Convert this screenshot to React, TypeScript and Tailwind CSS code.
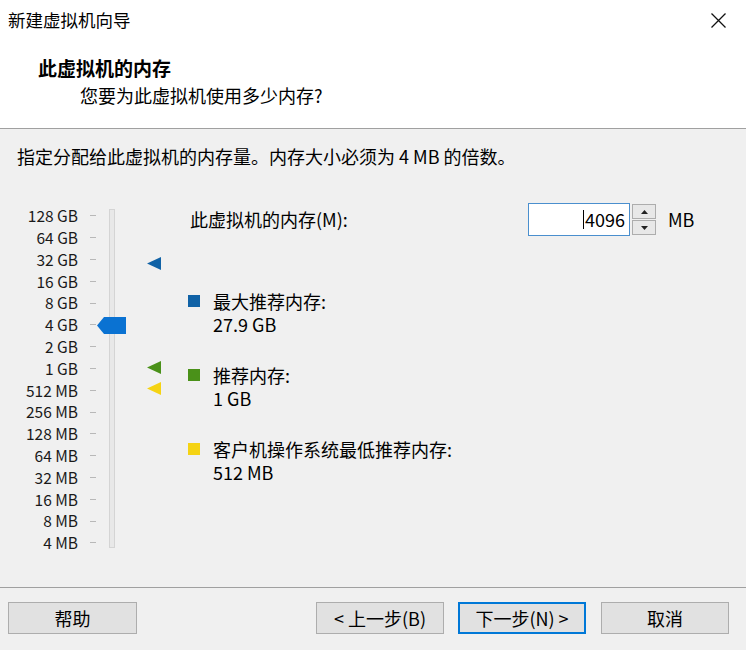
import React from 'react';

const font = { fontFamily: '"Noto Sans CJK SC", "Noto Sans", sans-serif' };

const levels = [
  '128 GB', '64 GB', '32 GB', '16 GB', '8 GB', '4 GB', '2 GB', '1 GB',
  '512 MB', '256 MB', '128 MB', '64 MB', '32 MB', '16 MB', '8 MB', '4 MB',
];

const Marker: React.FC<{ top: string; fill: string }> = ({ top, fill }) => (
  <svg className={`absolute left-[147px] ${top}`} width="14" height="13" viewBox="0 0 14 13">
    <polygon points="0,6.5 14,0 14,13" fill={fill} />
  </svg>
);

const MemorySlider: React.FC = () => (
  <div className="relative w-[188px] pt-[2px]">
    <div className="flex flex-col">
      {levels.map((l) => (
        <div key={l} className="flex h-[21.8px] items-center">
          <span className="w-[78px] text-right text-[15.5px] leading-none text-[#1a1a1a]">{l}</span>
          <span className="ml-[12px] h-px w-[6px] bg-[#b8b8b8]" />
        </div>
      ))}
    </div>
    {/* groove */}
    <div className="absolute left-[109px] top-[6px] h-[339px] w-[6px] border border-[#d4d4d4] bg-[#e8e8e8]" />
    {/* thumb at 4 GB */}
    <svg className="absolute left-[97px] top-[114px]" width="29" height="17" viewBox="0 0 29 17">
      <polygon points="0,8.5 7,0 29,0 29,17 7,17" fill="#0a72d2" />
    </svg>
    <Marker top="top-[54px]" fill="#1062a6" />
    <Marker top="top-[158px]" fill="#4a9119" />
    <Marker top="top-[179px]" fill="#f5d313" />
  </div>
);

const Legend: React.FC<{ color: string; title: string; value: string; className?: string }> = ({
  color, title, value, className,
}) => (
  <div className={`flex items-start ${className ?? ''}`}>
    <span className={`mt-[5px] h-[12px] w-[12px] ${color}`} />
    <div className="ml-[13px] flex flex-col text-[18px] leading-[23px]">
      <span>{title}</span>
      <span>{value}</span>
    </div>
  </div>
);

const Button: React.FC<{ children: React.ReactNode; primary?: boolean; className?: string }> = ({
  children, primary, className,
}) => (
  <button
    className={`flex h-[32px] w-[128px] items-center justify-center bg-[#e1e1e1] text-[18px] text-black ${
      primary ? 'border-2 border-[#0078d7]' : 'border border-[#adadad]'
    } ${className ?? ''}`}
  >
    {children}
  </button>
);

const App: React.FC = () => {
  return (
    <div className="flex h-[650px] w-[746px] flex-col overflow-hidden bg-[#f0f0f0] text-black" style={font}>
      {/* header */}
      <div className="flex h-[128px] flex-col bg-white">
        <div className="flex h-[40px] items-center justify-between pl-[8px] pr-[20px]">
          <span className="text-[17.5px] leading-none">新建虚拟机向导</span>
          <svg width="15" height="15" viewBox="0 0 15 15">
            <path d="M0.5 0.5 L14.5 14.5 M14.5 0.5 L0.5 14.5" stroke="#111" strokeWidth="1.3" />
          </svg>
        </div>
        <div className="mt-[16px] pl-[38px] text-[19px] font-bold leading-[24px]">此虚拟机的内存</div>
        <div className="mt-[3px] pl-[80px] text-[18px] leading-[24px]">您要为此虚拟机使用多少内存?</div>
      </div>
      <div className="h-px bg-[#a0a0a0]" />

      {/* body */}
      <div className="flex flex-1 flex-col">
        <div className="pl-[17px] pt-[15px] text-[18px] leading-[24px]">
          指定分配给此虚拟机的内存量。内存大小必须为 4 MB 的倍数。
        </div>
        <div className="mt-[35px] flex">
          <MemorySlider />
          <div className="flex flex-1 flex-col">
            <div className="flex h-[33px] items-center">
              <span className="w-[340px] pl-[2px] text-[18px]">此虚拟机的内存(M):</span>
              <div className="flex h-[33px] w-[102px] items-center justify-end border border-[#4a8fce] bg-white pr-[4px] text-[18px]">
                <span className="mr-px h-[19px] w-px bg-black" />
                4096
              </div>
              <div className="ml-[2px] flex h-[31px] w-[24px] flex-col gap-px">
                <div className="flex flex-1 items-center justify-center border border-[#adadad] bg-[#e8e8e8]">
                  <svg width="7" height="4" viewBox="0 0 7 4"><polygon points="3.5,0 7,4 0,4" fill="#222" /></svg>
                </div>
                <div className="flex flex-1 items-center justify-center border border-[#adadad] bg-[#e8e8e8]">
                  <svg width="7" height="4" viewBox="0 0 7 4"><polygon points="0,0 7,0 3.5,4" fill="#222" /></svg>
                </div>
              </div>
              <span className="ml-[12px] text-[18px]">MB</span>
            </div>
            <Legend className="mt-[54px]" color="bg-[#1062a6]" title="最大推荐内存:" value="27.9 GB" />
            <Legend className="mt-[28px]" color="bg-[#4a9119]" title="推荐内存:" value="1 GB" />
            <Legend className="mt-[28px]" color="bg-[#f5d313]" title="客户机操作系统最低推荐内存:" value="512 MB" />
          </div>
        </div>
      </div>

      {/* footer */}
      <div className="h-px bg-[#a0a0a0]" />
      <div className="flex h-[62px] items-start pl-[8px] pr-[17px] pt-[14px]">
        <Button className="w-[129px]">帮助</Button>
        <div className="flex-1" />
        <Button>&lt; 上一步(B)</Button>
        <Button primary className="ml-[14px]">下一步(N) &gt;</Button>
        <Button className="ml-[15px]">取消</Button>
      </div>
    </div>
  );
};

export default App;
